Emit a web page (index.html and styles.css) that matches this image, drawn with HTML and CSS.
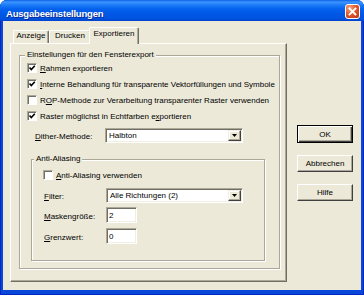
FILE: index.html
```html
<!DOCTYPE html>
<html lang="de">
<head>
    <meta charset="UTF-8">
    <title>Ausgabeeinstellungen</title>
    <link rel="stylesheet" href="styles.css">
</head>
<body>
    <div class="window">
        <div class="titlebar">
            <span class="title">Ausgabeeinstellungen</span>
            <span class="close">
                <svg width="15" height="15" viewBox="0 0 15 15">
                    <defs>
                        <radialGradient id="closeGlow" cx="30%" cy="25%" r="80%">
                            <stop offset="0" stop-color="#f7a585"/>
                            <stop offset="0.55" stop-color="#e25a2d"/>
                            <stop offset="1" stop-color="#c8401a"/>
                        </radialGradient>
                    </defs>
                    <rect x="0.5" y="0.5" width="14" height="14" rx="2.5" fill="url(#closeGlow)" stroke="#fff"/>
                    <path d="M4.5 4.5 L10.5 10.5 M10.5 4.5 L4.5 10.5" stroke="#fff" stroke-width="1.8" stroke-linecap="square"/>
                </svg>
            </span>
        </div>
        <div class="frame">
            <div class="tabs">
                <div class="tabstrip">
                    <span class="tab tab-anzeige">Anzeige</span>
                    <span class="tab tab-drucken">Drucken</span>
                    <span class="tab tab-active">Exportieren</span>
                </div>
                <div class="panel">
                    <fieldset class="group group-main">
                        <legend><span>Einstellungen für den Fensterexport</span></legend>
                        <div class="group-body main-body">
                            <div class="check"><span class="box checked"></span><span><u>R</u>ahmen exportieren</span></div>
                            <div class="check"><span class="box checked"></span><span><u>I</u>nterne Behandlung für transparente Vektorfüllungen und Symbole</span></div>
                            <div class="check"><span class="box"></span><span>R<u>O</u>P-Methode zur Verarbeitung transparenter Raster verwenden</span></div>
                            <div class="check"><span class="box checked"></span><span>Raster möglichst in Echtfarben e<u>x</u>portieren</span></div>
                            <div class="field dither">
                                <label><u>D</u>ither-Methode:</label>
                                <div class="combo combo-dither"><span class="combo-value">Halbton</span><span class="combo-btn"></span></div>
                            </div>
                            <fieldset class="group group-aa">
                                <legend><span>Anti-Aliasing</span></legend>
                                <div class="group-body aa-body">
                                    <div class="check"><span class="box"></span><span><u>A</u>nti-Aliasing verwenden</span></div>
                                    <div class="field aa-field filter">
                                        <label><u>F</u>ilter:</label>
                                        <div class="combo combo-filter"><span class="combo-value">Alle Richtungen (2)</span><span class="combo-btn"></span></div>
                                    </div>
                                    <div class="field aa-field mask">
                                        <label><u>M</u>askengröße:</label>
                                        <input class="edit" type="text" value="2">
                                    </div>
                                    <div class="field aa-field limit">
                                        <label><u>G</u>renzwert:</label>
                                        <input class="edit" type="text" value="0">
                                    </div>
                                </div>
                            </fieldset>
                        </div>
                    </fieldset>
                </div>
            </div>
            <div class="buttons">
                <button class="btn btn-default">OK</button>
                <button class="btn">Abbrechen</button>
                <button class="btn">Hilfe</button>
            </div>
        </div>
    </div>
</body>
</html>
```

FILE: styles.css
```css
html, body {
    margin: 0;
    padding: 0;
    background: #fff;
}
body {
    font-family: "Liberation Sans", Arial, sans-serif;
    font-size: 8px;
    color: #000;
}
.window {
    width: 364px;
    height: 295px;
    display: flex;
    flex-direction: column;
    background: #0847d9;
    border-radius: 7px 7px 0 0;
    box-shadow: inset 1px 0 0 #0027c2, inset -1px -1px 0 #0027c2;
}
.titlebar {
    height: 21px;
    flex: none;
    display: flex;
    align-items: center;
    justify-content: space-between;
    padding: 0 4px 0 6px;
    border-radius: 7px 7px 0 0;
    background: linear-gradient(to bottom, #0a5fe8 0, #3d95ff 2px, #1c7cf7 5px, #0461ee 9px, #0056e4 15px, #0052df 19px, #0040cc 21px);
}
.title {
    color: #fff;
    font-weight: bold;
    font-size: 9.5px;
    letter-spacing: -0.2px;
    line-height: 11px;
    margin-top: 5px;
    text-shadow: 1px 1px 0 #0b2a94;
}
.close {
    width: 15px;
    height: 15px;
    margin-top: 2px;
    display: block;
}
.close svg {
    display: block;
}
.frame {
    flex: 1;
    margin: 0 3px 5px;
    padding: 6px 0 0 7px;
    background: #ece9d8;
    display: flex;
}
.tabs {
    width: 277px;
}
.tabstrip {
    height: 16px;
    padding-left: 3px;
    display: flex;
    align-items: flex-end;
}
.tab {
    height: 13px;
    box-sizing: border-box;
    border: 1px solid;
    border-color: #fff #716f64 transparent #fff;
    border-bottom: none;
    border-radius: 2px 2px 0 0;
    box-shadow: inset -1px 0 0 #aca899;
    text-align: center;
    line-height: 10px;
    background: #ece9d8;
}
.tab-anzeige {
    width: 36px;
}
.tab-drucken {
    width: 42px;
}
.tab-active {
    width: 50px;
    height: 17px;
    margin-left: -2px;
    margin-bottom: -1px;
    line-height: 12px;
    position: relative;
    z-index: 1;
}
.panel {
    height: 239px;
    box-sizing: border-box;
    border: 1px solid;
    border-color: #fff #716f64 #716f64 #fff;
    box-shadow: inset -1px -1px 0 #aca899;
    padding: 6px 0 0 8px;
}
.group {
    margin: 0;
    padding: 0;
    box-sizing: border-box;
    border: 1px solid #aca899;
    box-shadow: inset 1px 1px 0 #fff, 1px 1px 0 #fff;
}
.group legend {
    padding: 0 2px;
    line-height: 10px;
    background: #ece9d8;
}
.group-main {
    width: 261px;
}
.group-main > legend {
    margin-left: 5px;
}
.main-body {
    padding: 0 0 7px 7px;
}
.check {
    height: 16px;
    display: flex;
    align-items: center;
    gap: 3px;
    white-space: nowrap;
}
.box {
    width: 10px;
    height: 10px;
    flex: none;
    box-sizing: border-box;
    border: 1px solid;
    border-color: #aca899 #fff #fff #aca899;
    box-shadow: inset 1px 1px 0 #716f64;
    background: #fff;
}
.box.checked {
    background: #fff url("data:image/svg+xml,%3Csvg xmlns='http://www.w3.org/2000/svg' width='8' height='8'%3E%3Cpath d='M1.5 3.5 L3.3 5.5 L6.8 1.8' fill='none' stroke='%23000' stroke-width='1.6'/%3E%3C/svg%3E") no-repeat 0 0;
}
.field {
    display: grid;
    align-items: center;
}
.field label {
    padding-top: 2px;
}
.dither {
    grid-template-columns: 70px auto;
    margin-top: 4px;
    padding-left: 8px;
}
.combo {
    height: 15px;
    box-sizing: border-box;
    border: 1px solid;
    border-color: #aca899 #fff #fff #aca899;
    box-shadow: inset 1px 1px 0 #716f64, inset -1px -1px 0 #f1efe2;
    background: #fff;
    display: flex;
    align-items: center;
    padding: 1px;
}
.combo-dither {
    width: 138px;
}
.combo-filter {
    width: 137px;
}
.combo-value {
    flex: 1;
    padding-left: 2px;
    line-height: 11px;
}
.combo-btn {
    width: 13px;
    height: 11px;
    box-sizing: border-box;
    border: 1px solid;
    border-color: #f1efe2 #404040 #404040 #f1efe2;
    box-shadow: inset -1px -1px 0 #aca899, inset 1px 1px 0 #fff;
    background: #ece9d8 url("data:image/svg+xml,%3Csvg xmlns='http://www.w3.org/2000/svg' width='5' height='3'%3E%3Cpath d='M0 0 H5 L2.5 3 Z' fill='%23000'/%3E%3C/svg%3E") no-repeat 3px 3px;
}
.group-aa {
    width: 234px;
    margin: 11px 0 0 4px;
}
.group-aa > legend {
    margin-left: 2px;
}
.aa-body {
    padding: 3px 0 16px 11px;
}
.aa-field {
    grid-template-columns: 63px auto;
}
.aa-field label {
    padding-left: 1px;
}
.filter {
    margin-top: 5px;
}
.mask {
    margin-top: 4px;
}
.limit {
    margin-top: 5px;
}
.edit {
    width: 31px;
    height: 16px;
    margin: 0;
    padding: 0 0 0 2px;
    box-sizing: border-box;
    border: 1px solid;
    border-color: #aca899 #fff #fff #aca899;
    box-shadow: inset 1px 1px 0 #716f64, inset -1px -1px 0 #f1efe2;
    font-family: "Liberation Sans", Arial, sans-serif;
    font-size: 8px;
    color: #000;
    background: #fff;
    outline: none;
}
.buttons {
    width: 56px;
    margin-left: 10px;
    padding-top: 98px;
    display: flex;
    flex-direction: column;
    gap: 12px;
}
.btn {
    width: 56px;
    height: 17px;
    margin: 0;
    padding: 0;
    box-sizing: border-box;
    border: 1px solid;
    border-color: #fff #404040 #404040 #fff;
    box-shadow: inset -1px -1px 0 #aca899;
    background: #ece9d8;
    font-family: "Liberation Sans", Arial, sans-serif;
    font-size: 8px;
    color: #000;
}
.btn-default {
    height: 18px;
    border: 1px solid #000;
    box-shadow: inset 1px 1px 0 #fff, inset -1px -1px 0 #404040, inset -2px -2px 0 #aca899;
}
```
